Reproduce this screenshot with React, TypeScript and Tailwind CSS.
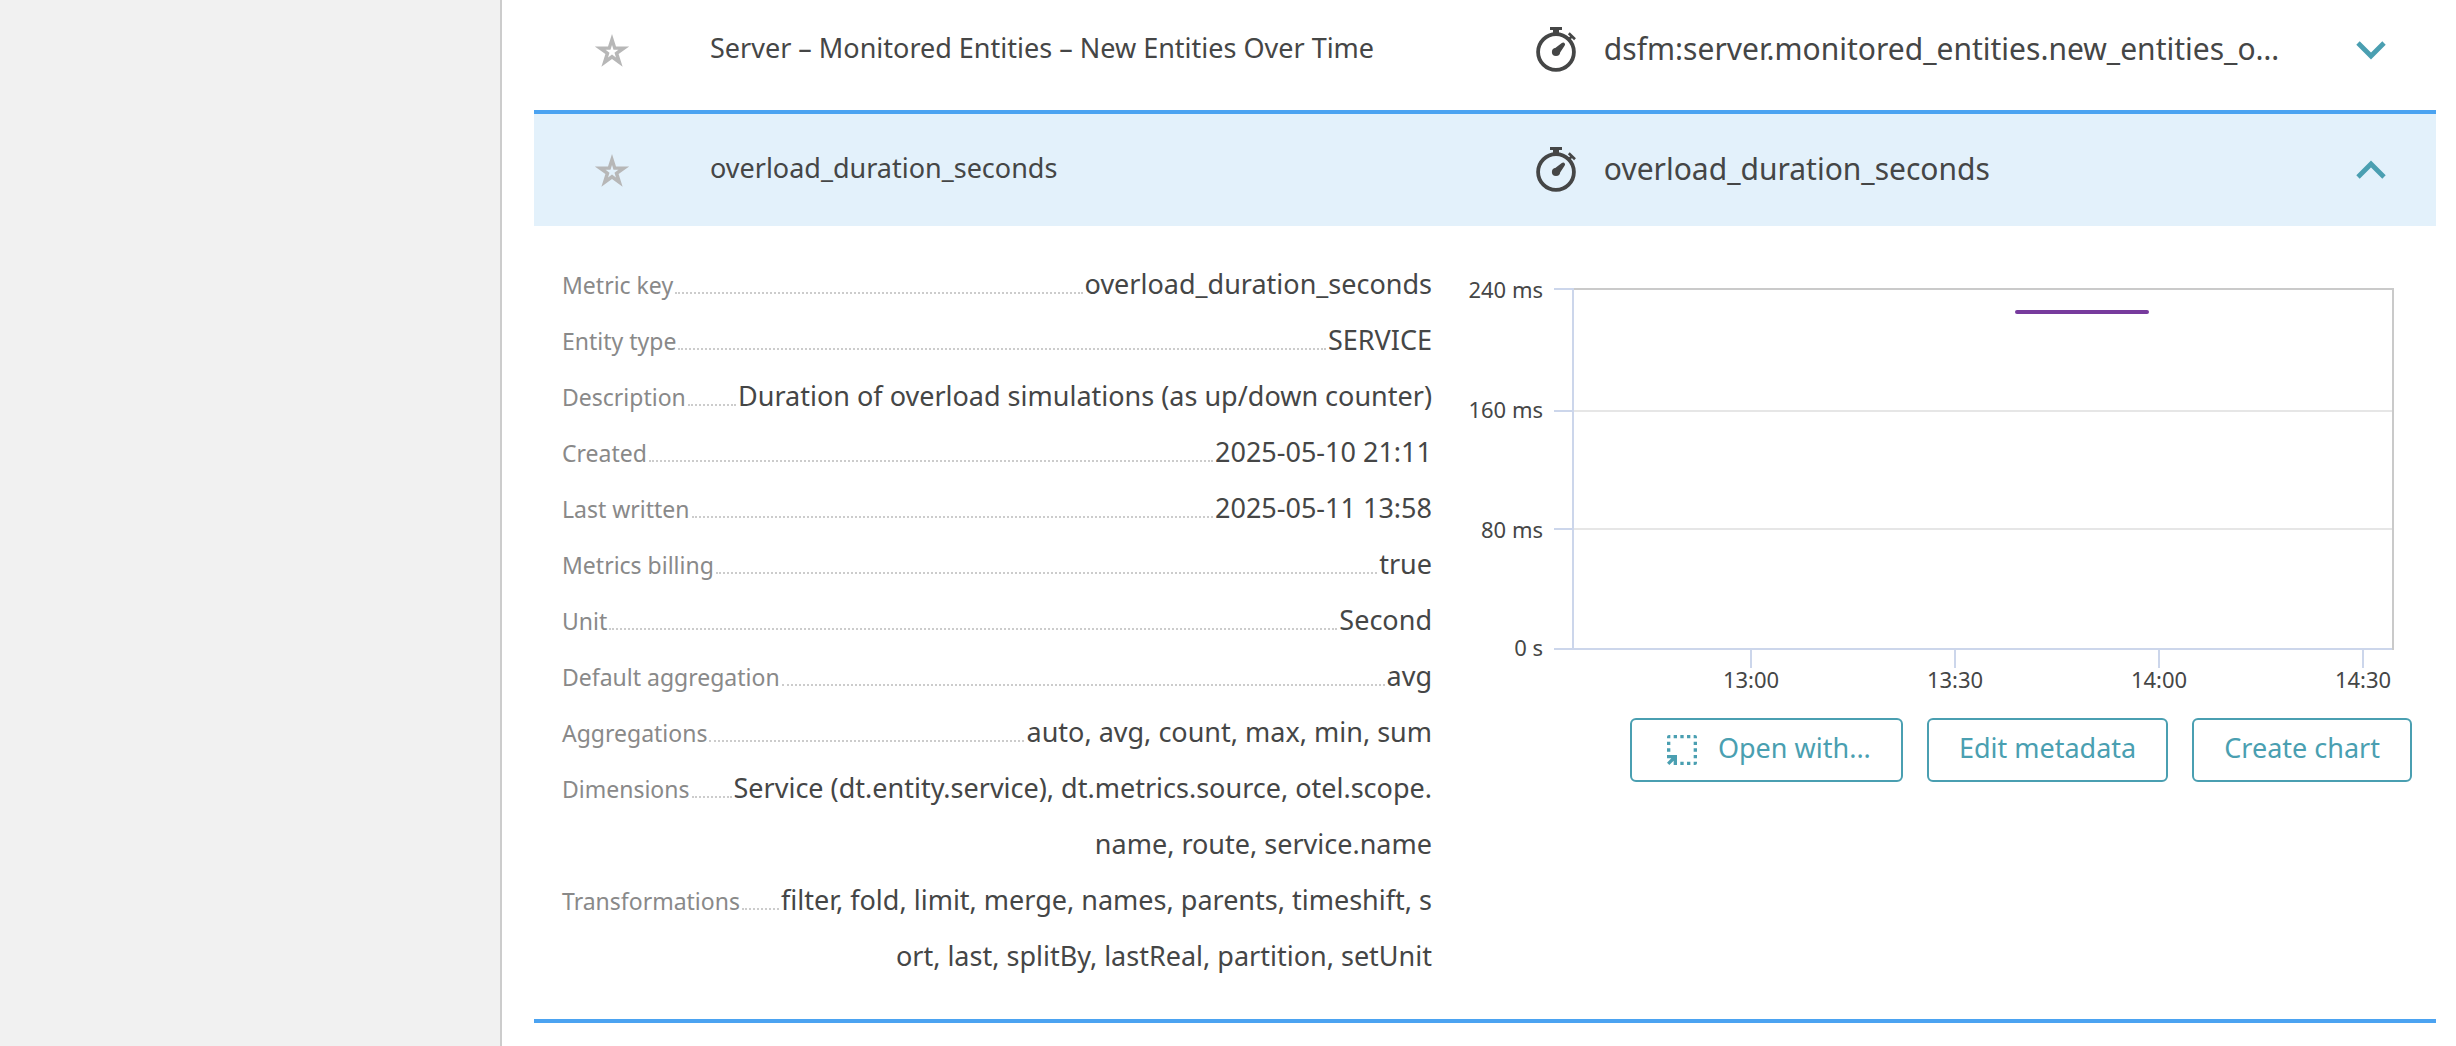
import type { ReactNode } from "react";

function StarIcon() {
  return (
    <svg className="size-10" viewBox="0 -1 40 40" fill="#b7b7b7" fillRule="evenodd" aria-hidden="true">
      <path d="M20 3L24 15.4H37.2L26.6 23.1L30.6 35.8L20 28.1L9.4 35.8L13.4 23.1L2.8 15.4H16ZM20 14L18.5 18.8H13.6L17.5 21.7L16 26.4L20 23.5L24 26.4L22.5 21.7L26.4 18.8H21.5Z" />
    </svg>
  );
}

function StopwatchIcon() {
  return (
    <svg className="size-12 shrink-0" viewBox="0 0 48 48" fill="none" stroke="#454646" aria-hidden="true">
      <circle cx="24" cy="26" r="17.9" strokeWidth="3.8" />
      <path d="M18 1H30V4H27V9H21V4H18Z" fill="#454646" stroke="none" />
      <path d="M36.8 7.2L43 13.2M37.4 12.8L40 10.2" strokeWidth="2.6" />
      <path d="M21.6 23.2L29.8 17Q31.6 16 32.8 17.4Q33.6 18.6 32.4 20L26.8 28.4Z" fill="#454646" stroke="none" />
      <circle cx="24" cy="26" r="4.1" fill="#454646" stroke="none" />
    </svg>
  );
}

function Chevron({ up }: { up: boolean }) {
  return (
    <svg className="size-8" viewBox="0 0 32 32" fill="none" stroke="#4a9fb1" strokeWidth="4.8" aria-hidden="true">
      <path d={up ? "M3 23L16 10L29 23" : "M3 9L16 22L29 9"} />
    </svg>
  );
}

function OpenWithIcon() {
  return (
    <svg className="size-10" viewBox="-1.5 -1.5 12 12" fill="currentColor" aria-hidden="true">
      <path d="M0 1V.6Q0 0 .6 0H1V1ZM2 0H3V1H2ZM4 0H5V1H4ZM6 0H7V1H6ZM8 0H8.4Q9 0 9 .6V1H8ZM0 2H1V3H0ZM0 4H1V5H0ZM8 2H9V3H8ZM8 4H9V5H8ZM8 6H9V7H8ZM8 8H9V8.4Q9 9 8.4 9H8ZM6 8H7V9H6ZM4 8H5V9H4Z" />
      <path d="M0 6H3V9H2V7.7L.7 9L0 8.3L1.3 7H0Z" />
    </svg>
  );
}

const metrics = [
  {
    name: "Server – Monitored Entities – New Entities Over Time",
    key: "dsfm:server.monitored_entities.new_entities_o…",
    open: false,
  },
  { name: "overload_duration_seconds", key: "overload_duration_seconds", open: true },
];

const details: [string, string][] = [
  ["Metric key", "overload_duration_seconds"],
  ["Entity type", "SERVICE"],
  ["Description", "Duration of overload simulations (as up/down counter)"],
  ["Created", "2025-05-10 21:11"],
  ["Last written", "2025-05-11 13:58"],
  ["Metrics billing", "true"],
  ["Unit", "Second"],
  ["Default aggregation", "avg"],
  ["Aggregations", "auto, avg, count, max, min, sum"],
  ["Dimensions", "Service (dt.entity.service), dt.metrics.source, otel.scope.\nname, route, service.name"],
  ["Transformations", "filter, fold, limit, merge, names, parents, timeshift, s\nort, last, splitBy, lastReal, partition, setUnit"],
];

const yTicks = [
  { label: "240 ms", line: 33, text: 42 },
  { label: "160 ms", line: 155, text: 162 },
  { label: "80 ms", line: 273, text: 282 },
  { label: "0 s", line: 393, text: 400 },
];

const xTicks = [
  { label: "13:00", x: 287 },
  { label: "13:30", x: 491 },
  { label: "14:00", x: 695 },
  { label: "14:30", x: 899 },
];

function Chart() {
  return (
    <svg className="block h-auto w-full" viewBox="0 0 948 440" role="img" aria-label="overload_duration_seconds over time">
      <path d="M109 155H928M109 273H928" stroke="#e6e6e6" strokeWidth="2" />
      <path d="M109 33H929V394" stroke="#cacaca" strokeWidth="2" fill="none" />
      <path d="M109 32V393M90 393H928" stroke="#ccd6eb" strokeWidth="2" />
      {yTicks.map((t) => (
        <g key={t.label}>
          <path d={`M90 ${t.line}H110`} stroke="#ccd6eb" strokeWidth="2" />
          <text x="79" y={t.text} textAnchor="end" fontSize="22" fill="#454646">
            {t.label}
          </text>
        </g>
      ))}
      {xTicks.map((t) => (
        <g key={t.label}>
          <path d={`M${t.x} 394V412`} stroke="#ccd6eb" strokeWidth="2" />
          <text x={t.x} y="432" textAnchor="middle" fontSize="22" fill="#454646">
            {t.label}
          </text>
        </g>
      ))}
      <path d="M553 56H683" stroke="#773b9d" strokeWidth="4" strokeLinecap="round" />
    </svg>
  );
}

function ActionButton({ icon, children }: { icon?: ReactNode; children: ReactNode }) {
  return (
    <button
      type="button"
      className="flex h-16 items-center gap-4 rounded-md border-2 border-[#4a9fb1] px-[30px] text-[27px] text-[#4a9fb1]"
    >
      {icon}
      <span className="pb-1">{children}</span>
    </button>
  );
}

function MetricDetails() {
  return (
    <div className="grid grid-cols-[minmax(0,870fr)_minmax(0,948fr)] gap-8 pt-[30px] pr-6 pb-[35px] pl-7">
      <dl>
        {details.map(([label, value]) => (
          <div key={label} className="flex items-baseline">
            <dt className="pr-0.5 text-[23px] leading-8 text-[#898989]">{label}</dt>
            <div className="flex-1 border-b-2 border-dotted border-[#cccccc]" />
            <dd className="pl-0.5 text-right text-[27px] leading-14 whitespace-pre-line">{value}</dd>
          </div>
        ))}
      </dl>
      <div>
        <Chart />
        <div className="mt-[22px] flex flex-wrap justify-end gap-6">
          <ActionButton icon={<OpenWithIcon />}>Open with...</ActionButton>
          <ActionButton>Edit metadata</ActionButton>
          <ActionButton>Create chart</ActionButton>
        </div>
      </div>
    </div>
  );
}

export default function App() {
  return (
    <div className="flex min-h-screen bg-white font-['Noto_Sans',sans-serif] text-[#454646]">
      <aside className="w-[502px] shrink-0 border-r-2 border-[#cccccc] bg-[#f1f1f1]" />
      <main className="min-w-0 flex-1 pr-5 pl-8">
        <table className="w-full table-fixed border-collapse">
          <colgroup>
            <col className="w-[176px]" />
            <col className="w-[43%]" />
            <col />
            <col className="w-[130px]" />
          </colgroup>
          <tbody>
            {metrics.map((m) => (
              <tr key={m.name} className={m.open ? "h-[114px] bg-[#e3f1fb]" : "h-28 border-b-4 border-[#4ba3f1]"}>
                <td className={m.open ? "" : "pb-2.5"}>
                  <button type="button" aria-label={`Mark ${m.name} as favorite`} className="mx-auto flex w-fit -translate-x-2.5">
                    <StarIcon />
                  </button>
                </td>
                <td className={m.open ? "" : "pb-2.5"}>
                  <div className="truncate pb-1 text-[27px]">{m.name}</div>
                </td>
                <td className={m.open ? "" : "pb-2.5"}>
                  <div className="flex items-center gap-6 pl-1">
                    <StopwatchIcon />
                    <span className="truncate pb-1 text-[30px]">{m.key}</span>
                  </div>
                </td>
                <td className={m.open ? "" : "pb-2.5"}>
                  <button type="button" aria-expanded={m.open} aria-label="Toggle details" className="mx-auto flex w-fit">
                    <Chevron up={m.open} />
                  </button>
                </td>
              </tr>
            ))}
            <tr className="border-b-4 border-[#4ba3f1]">
              <td colSpan={4}>
                <MetricDetails />
              </td>
            </tr>
          </tbody>
        </table>
      </main>
    </div>
  );
}
